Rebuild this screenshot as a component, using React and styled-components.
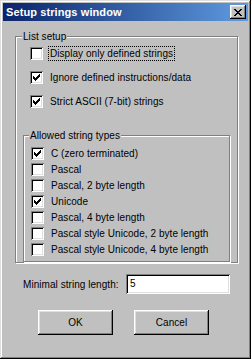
import React from "react";
import styled, { createGlobalStyle } from "styled-components";

const GlobalStyle = createGlobalStyle`
  html, body {
    margin: 0;
    padding: 0;
    background: #c0c0c0;
  }
  * {
    box-sizing: border-box;
  }
`;

const Window = styled.div`
  width: 251px;
  height: 359px;
  padding: 3px;
  background: #c0c0c0;
  font-family: "Liberation Sans", Arial, sans-serif;
  font-size: 10px;
  letter-spacing: 0.05px;
  color: #000;
  box-shadow: inset -1px -1px #000, inset 1px 1px #dfdfdf,
    inset -2px -2px #808080, inset 2px 2px #fff;
`;

const TitleBar = styled.div`
  height: 18px;
  display: flex;
  align-items: center;
  justify-content: space-between;
  padding: 0 2px 0 3px;
  background: linear-gradient(90deg, #0a246a, #5f9be0);
`;

const TitleText = styled.span`
  color: #fff;
  font-weight: bold;
  font-size: 11px;
  letter-spacing: 0.1px;
`;

const CloseButton = styled.div`
  width: 16px;
  height: 14px;
  display: flex;
  align-items: center;
  justify-content: center;
  background: #c0c0c0;
  box-shadow: inset -1px -1px #000, inset 1px 1px #fff,
    inset -2px -2px #808080, inset 2px 2px #dfdfdf;
`;

const Body = styled.div`
  padding: 15px 15px 0 12px;
  display: flex;
  flex-direction: column;
`;

const Group = styled.div`
  position: relative;
  width: ${(p) => p.$w}px;
  height: ${(p) => p.$h}px;
  margin-left: ${(p) => p.$ml || 0}px;
  border: 1px solid #808080;
  box-shadow: inset 1px 1px #fff, 1px 1px #fff;
  padding: ${(p) => p.$pad};
  display: flex;
  flex-direction: column;
  gap: ${(p) => p.$gap}px;
`;

const GroupLabel = styled.span`
  position: absolute;
  top: -7px;
  left: ${(p) => p.$left}px;
  padding: 0 1px;
  line-height: 13px;
  background: #c0c0c0;
`;

const Row = styled.div`
  display: flex;
  align-items: center;
  height: 13px;
`;

const Box = styled.div`
  width: 13px;
  height: 13px;
  flex: none;
  background: #fff;
  display: flex;
  align-items: center;
  justify-content: center;
  box-shadow: inset 1px 1px #808080, inset -1px -1px #fff,
    inset 2px 2px #000, inset -2px -2px #dfdfdf;
`;

const RowText = styled.span`
  margin-left: 6px;
  padding: 0 1px;
  line-height: 13px;
  white-space: nowrap;
  outline: ${(p) => (p.$focus ? "1px dotted #000" : "none")};
`;

const Spacer = styled.div`
  height: ${(p) => p.$h}px;
`;

const LengthRow = styled.div`
  display: flex;
  align-items: center;
  margin-top: 11px;
  padding-left: 8px;
`;

const LengthLabel = styled.span`
  width: 103px;
  white-space: nowrap;
`;

const Field = styled.div`
  width: 104px;
  height: 20px;
  background: #fff;
  padding: 3px 4px;
  line-height: 14px;
  box-shadow: inset 1px 1px #808080, inset -1px -1px #fff,
    inset 2px 2px #000, inset -2px -2px #dfdfdf;
`;

const Buttons = styled.div`
  display: flex;
  gap: 21px;
  margin-top: 16px;
  padding-left: 23px;
`;

const Button = styled.div`
  width: 75px;
  height: 25px;
  display: flex;
  align-items: center;
  justify-content: center;
  background: #c0c0c0;
  box-shadow: inset -1px -1px #000, inset 1px 1px #fff,
    inset -2px -2px #808080, inset 2px 2px #dfdfdf;
`;

const Check = () => (
  <svg width="9" height="9" viewBox="0 0 9 9" shapeRendering="crispEdges">
    <path
      d="M1 3h1v1h1v1h1V4h1V3h1V2h1V1h1v3H7v1H6v1H5v1H4v1H3V7H2V6H1z"
      fill="#000"
    />
  </svg>
);

const CheckRow = ({ checked, focus, children }) => (
  <Row>
    <Box>{checked && <Check />}</Box>
    <RowText $focus={focus}>{children}</RowText>
  </Row>
);

const types = [
  ["C (zero terminated)", true],
  ["Pascal", false],
  ["Pascal, 2 byte length", false],
  ["Unicode", true],
  ["Pascal, 4 byte length", false],
  ["Pascal style Unicode, 2 byte length", false],
  ["Pascal style Unicode, 4 byte length", false],
];

export default function App() {
  return (
    <>
      <GlobalStyle />
      <Window>
        <TitleBar>
          <TitleText>Setup strings window</TitleText>
          <CloseButton>
            <svg width="8" height="7" viewBox="0 0 8 7" shapeRendering="crispEdges">
              <path
                d="M0 0h2v1h1v1h2V1h1V0h2v1H7v1H6v1H5v1h1v1h1v1h1v1H6V6H5V5H3v1H2v1H0V6h1V5h1V4h1V3H2V2H1V1H0z"
                fill="#000"
              />
            </svg>
          </CloseButton>
        </TitleBar>
        <Body>
          <Group $w={223} $h={227} $pad="10px 0 0 14px" $gap={11}>
            <GroupLabel $left={6}>List setup</GroupLabel>
            <CheckRow focus>Display only defined strings</CheckRow>
            <CheckRow checked>Ignore defined instructions/data</CheckRow>
            <CheckRow checked>Strict ASCII (7-bit) strings</CheckRow>
            <Spacer $h={5} />
            <Group $w={207} $h={131} $ml={-7} $pad="11px 0 0 7px" $gap={3}>
              <GroupLabel $left={5}>Allowed string types</GroupLabel>
              {types.map(([label, on]) => (
                <CheckRow key={label} checked={on}>
                  {label}
                </CheckRow>
              ))}
            </Group>
          </Group>
          <LengthRow>
            <LengthLabel>Minimal string length:</LengthLabel>
            <Field>5</Field>
          </LengthRow>
          <Buttons>
            <Button>OK</Button>
            <Button>Cancel</Button>
          </Buttons>
        </Body>
      </Window>
    </>
  );
}
